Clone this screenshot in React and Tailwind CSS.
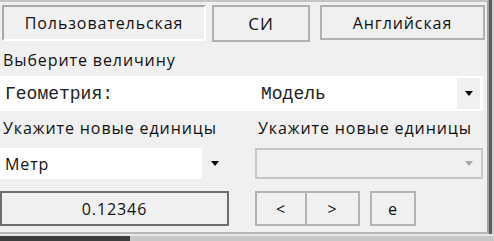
import React from "react";

const sans = { fontFamily: '"Open Sans", "Noto Sans", sans-serif' };
const mono = { fontFamily: '"Liberation Mono", "Courier New", monospace' };

function Arrow({ color = "#000" }) {
  return (
    <svg width="8" height="5" viewBox="0 0 8 5">
      <path d="M0 0 H8 L4 5 Z" fill={color} />
    </svg>
  );
}

export default function App() {
  return (
    <div
      className="w-[494px] h-[241px] overflow-hidden flex flex-col bg-[#d6d6d6] text-[#111] text-[16px] leading-[20px] tracking-[0.9px]"
      style={sans}
    >
      <div className="flex h-[234px]">
        <div className="w-[489px] flex flex-col bg-[#f0f0f0] border-t-2 border-t-[#c4c4c4] border-r-2 border-r-[#a0a0a0] border-b-2 border-b-[#b8b8b8]">
          {/* tabs */}
          <div className="flex items-start pt-[3px] pl-[2px]">
            <div className="w-[204px] h-[36px] flex items-center justify-center border-t-2 border-l-2 border-t-[#a8a8a8] border-l-[#a8a8a8] border-b-2 border-r-2 border-b-white border-r-white bg-[#f0f0f0]">
              Пользовательская
            </div>
            <div className="ml-[6px] w-[98px] h-[37px] flex items-center justify-center border-2 border-[#b0b0b0] bg-[#f0f0f0] text-[17px]">
              СИ
            </div>
            <div className="ml-[10px] w-[165px] h-[35px] flex items-center justify-center border-2 border-[#b0b0b0] bg-[#f0f0f0]">
              Английская
            </div>
          </div>

          <div className="mt-[8px] pl-[3px]">Выберите величину</div>

          <div className="mt-[6px] w-[483px] h-[35px] bg-white flex items-center tracking-normal">
            <div className="w-[256px] pl-[5px] text-[18px] text-[#222]" style={mono}>
              Геометрия:
            </div>
            <div className="flex-1 text-[18px] pl-[5px] text-[#222]" style={mono}>
              Модель
            </div>
            <div className="w-[23px] h-[31px] mr-[3px] bg-[#f0f0f0] flex items-center justify-center">
              <Arrow />
            </div>
          </div>

          <div className="mt-[7px] flex">
            <div className="w-[255px] pl-[3px]">Укажите новые единицы</div>
            <div className="pl-[3px]">Укажите новые единицы</div>
          </div>

          <div className="mt-[10px] flex h-[31px]">
            <div className="w-[228px] h-full bg-white flex items-center">
              <div className="flex-1 pl-[5px]">Метр</div>
              <div className="w-[26px] h-[31px] bg-[#f0f0f0] flex items-center justify-center">
                <Arrow />
              </div>
            </div>
            <div className="ml-[27px] w-[228px] h-full border-2 border-[#c6c6c6] bg-[#f0f0f0] flex items-center justify-end pr-[8px]">
              <Arrow color="#a8a8a8" />
            </div>
          </div>

          <div className="mt-[12px] flex h-[35px]">
            <div className="w-[229px] h-full border-2 border-[#6e6e6e] bg-[#f0f0f0] flex items-center justify-center">
              0.12346
            </div>
            <div className="ml-[26px] w-[105px] h-full flex">
              <div className="w-[52px] h-full border-2 border-[#b4b4b4] flex items-center justify-center">
                &lt;
              </div>
              <div className="w-[53px] h-full border-2 border-l-0 border-[#b4b4b4] flex items-center justify-center">
                &gt;
              </div>
            </div>
            <div className="ml-[10px] w-[46px] h-full border-2 border-[#b4b4b4] flex items-center justify-center">
              e
            </div>
          </div>
        </div>
        <div className="w-[3px] bg-[#5c5c5c]" />
        <div className="w-[2px] bg-[#cfcfcf]" />
      </div>
      <div className="flex h-[7px] flex-col">
        <div className="h-[2px] bg-[#e6e6e6]" />
        <div className="flex h-[5px]">
          <div className="w-[130px] bg-[#3c3c3c]" />
          <div className="flex-1 bg-[#c8c8c8]" />
        </div>
      </div>
    </div>
  );
}
